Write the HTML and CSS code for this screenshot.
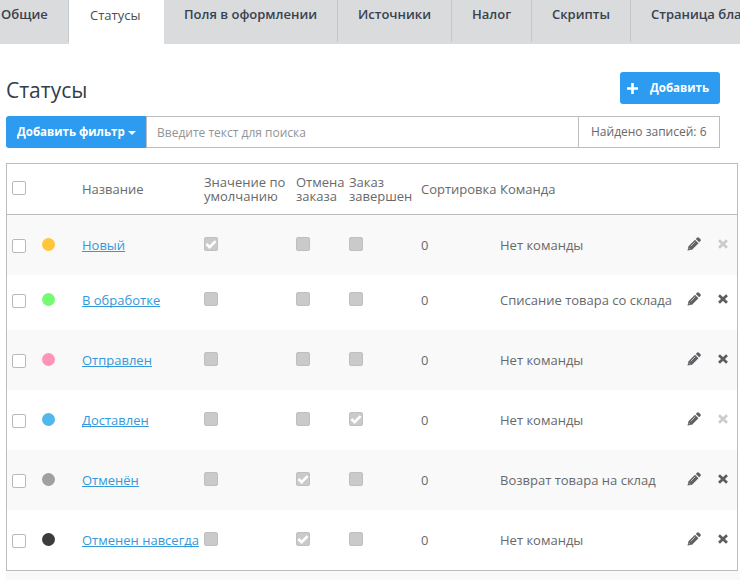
FILE: index.html
```html
<!DOCTYPE html>
<html lang="ru">
<head>
<meta charset="utf-8">
<title>Статусы</title>
<link rel="stylesheet" href="styles.css">
</head>
<body>
<svg class="defs" width="0" height="0">
  <symbol id="pencil" viewBox="0 0 14 14"><path fill="currentColor" d="M.5 13.5 1.5 9.2 8 2.7 11.5 6.2 5 12.7zM8.8 1.9 10.2.6Q11.2-.1 12 .7L13.5 2.2Q14.2 3 13.5 3.9L12.2 5.3z"/><path d="M3.7 9.3 8.2 4.8M1.9 11.2l1.2 1.2" stroke="#d8d8d8" stroke-width=".8" fill="none"/></symbol>
  <symbol id="cross" viewBox="0 0 10 10"><path d="M1 1.2 9 8.8M9 1.2 1 8.8" stroke="currentColor" stroke-width="2.7"/></symbol>
  <symbol id="check" viewBox="0 0 12 12"><path d="M1.4 6 4.6 9.1 10.6 3.1" fill="none" stroke="#fff" stroke-width="2.7"/></symbol>
</svg>
<nav class="tabs">
  <a class="tab first">Общие</a><a class="tab active">Статусы</a><a class="tab fields">Поля в оформлении</a><a class="tab sources">Источники</a><a class="tab tax">Налог</a><a class="tab scripts">Скрипты</a><a class="tab blank">Страница бланка</a>
</nav>
<main>
  <header class="heading">
    <h1>Статусы</h1>
    <button class="add"><svg width="11" height="11" viewBox="0 0 11 11"><path d="M5.5 0v11M0 5.5h11" stroke="#fff" stroke-width="2.6"/></svg><span>Добавить</span></button>
  </header>
  <div class="filter">
    <button class="filter-btn"><span>Добавить фильтр</span><i class="caret"></i></button>
    <div class="search">Введите текст для поиска</div>
    <div class="found">Найдено записей: 6</div>
  </div>
  <section class="table">
    <div class="row head"><i class="box"></i><span></span><span>Название</span><span>Значение по<br>умолчанию</span><span>Отмена<br>заказа</span><span>Заказ<br>завершен</span><span>Сортировка</span><span>Команда</span></div>
    <div class="row odd"><i class="box"></i><i class="dot yellow"></i><a>Новый</a><i class="flag"><svg><use href="#check"/></svg></i><i class="flag"></i><i class="flag"></i><span>0</span><span>Нет команды</span><svg class="edit"><use href="#pencil"/></svg><svg class="del off"><use href="#cross"/></svg></div>
    <div class="row short"><i class="box"></i><i class="dot green"></i><a>В обработке</a><i class="flag"></i><i class="flag"></i><i class="flag"></i><span>0</span><span>Списание товара со склада</span><svg class="edit"><use href="#pencil"/></svg><svg class="del"><use href="#cross"/></svg></div>
    <div class="row odd"><i class="box"></i><i class="dot pink"></i><a>Отправлен</a><i class="flag"></i><i class="flag"></i><i class="flag"></i><span>0</span><span>Нет команды</span><svg class="edit"><use href="#pencil"/></svg><svg class="del"><use href="#cross"/></svg></div>
    <div class="row"><i class="box"></i><i class="dot blue"></i><a>Доставлен</a><i class="flag"></i><i class="flag"></i><i class="flag"><svg><use href="#check"/></svg></i><span>0</span><span>Нет команды</span><svg class="edit"><use href="#pencil"/></svg><svg class="del off"><use href="#cross"/></svg></div>
    <div class="row odd"><i class="box"></i><i class="dot gray"></i><a>Отменён</a><i class="flag"></i><i class="flag"><svg><use href="#check"/></svg></i><i class="flag"></i><span>0</span><span>Возврат товара на склад</span><svg class="edit"><use href="#pencil"/></svg><svg class="del"><use href="#cross"/></svg></div>
    <div class="row"><i class="box"></i><i class="dot black"></i><a>Отменен навсегда</a><i class="flag"></i><i class="flag"><svg><use href="#check"/></svg></i><i class="flag"></i><span>0</span><span>Нет команды</span><svg class="edit"><use href="#pencil"/></svg><svg class="del"><use href="#cross"/></svg></div>
  </section>
  <div class="footer"></div>
</main>
</body>
</html>
```
FILE: styles.css
```css
* { box-sizing: border-box; }
html, body { height: 580px; overflow: hidden; }
body { margin: 0; background: #fff; color: #67696b; font: 13px/14px "Open Sans", sans-serif; }
.defs { display: block; height: 0; }
.tabs { display: flex; height: 44px; background: #dadbdc; overflow: hidden; }
.tab { flex: none; height: 42px; padding: 6px 0 0 20px; border-right: 1px solid #c5c8ca; color: #37414f; font-size: 13px; font-weight: 600; line-height: 16px; white-space: nowrap; }
.first { width: 69px; padding-left: 1px; }
.active { width: 95px; height: 44px; padding: 7px 0 0 21px; border: 0; background: #fff; color: #4b4d50; font-weight: 500; }
.fields { width: 174px; }
.sources { width: 114px; }
.tax { width: 80px; }
.scripts { width: 99px; }
.blank { width: 170px; }
.heading { display: flex; justify-content: space-between; height: 60px; padding: 28px 20px 0 6px; }
h1 { margin: 4px 0 0; color: #323c4b; font-size: 21px; font-weight: 400; line-height: 28px; }
button { border: 0; background: #2d9cf0; color: #fff; font: 700 11.5px/16px "Open Sans", sans-serif; white-space: nowrap; }
.add { display: flex; align-items: center; gap: 12px; width: 100px; height: 32px; padding: 0 0 0 7px; border-radius: 3px; }
main { height: 536px; }
.filter { display: flex; height: 32px; margin: 12px 20px 15px 6px; }
.filter-btn { display: flex; align-items: center; gap: 3px; width: 140px; padding: 0 0 0 11px; border-radius: 3px 0 0 3px; }
.caret { border: 4px solid transparent; border-top-color: #fff; border-bottom: 0; margin-top: 2px; }
.search { flex: 1; padding: 8px 10px; border: 1px solid #bdbdbd; border-right: 0; color: #929496; font-size: 12px; line-height: 15px; }
.found { width: 142px; padding: 7px 12px; border: 1px solid #bdbdbd; font-size: 12px; line-height: 16px; white-space: nowrap; }
.table { width: 732px; margin-left: 6px; border: 1px solid #bdbdbd; }
.row { display: grid; grid-template-columns: 30px 40px 122px 92px 53px 72px 79px 187px 31px 19px; align-items: center; height: 60px; padding-left: 5px; white-space: nowrap; }
.row > span, .row > a { padding-bottom: 1px; }
.head { height: 51px; border-bottom: 1px solid #bdbdbd; }
.short { height: 55px; }
.short > * { margin-top: -5px; }
.odd { background: #f9f9f9; }
.row a { color: #3498db; text-decoration: underline; text-decoration-skip-ink: none; text-underline-offset: 1px; }
.box { width: 14px; height: 14px; border: 1px solid #b9b9b9; border-radius: 2px; background: #fff; margin-top: 2px; }
.head .box { margin-top: -2px; }
.short .box { margin-top: -3px; }
.dot { width: 13px; height: 13px; border-radius: 50%; margin-top: -2px; }
.short .dot { margin-top: -7px; }
.yellow { background: #ffc63d; }
.green { background: #74fb72; }
.pink { background: #ff94b6; }
.blue { background: #51b8ed; }
.gray { background: #a0a0a0; }
.black { background: #3c3c3c; }
.flag { width: 14px; height: 14px; margin-top: -2px; border: 1px solid #bfbfbf; border-radius: 2px; background: #cacaca; }
.short .flag { margin-top: -7px; }
.flag svg { display: block; width: 12px; height: 12px; }
.edit { width: 14px; height: 14px; margin-top: -2px; color: #606164; }
.del { width: 10px; height: 10px; margin-top: -2px; color: #5b5d60; }
.short .edit, .short .del { margin-top: -7px; }
.off { color: #cbcbcb; }
.footer { height: 9px; margin: 0 0 0 6px; background: #f9f9f9; }
```
